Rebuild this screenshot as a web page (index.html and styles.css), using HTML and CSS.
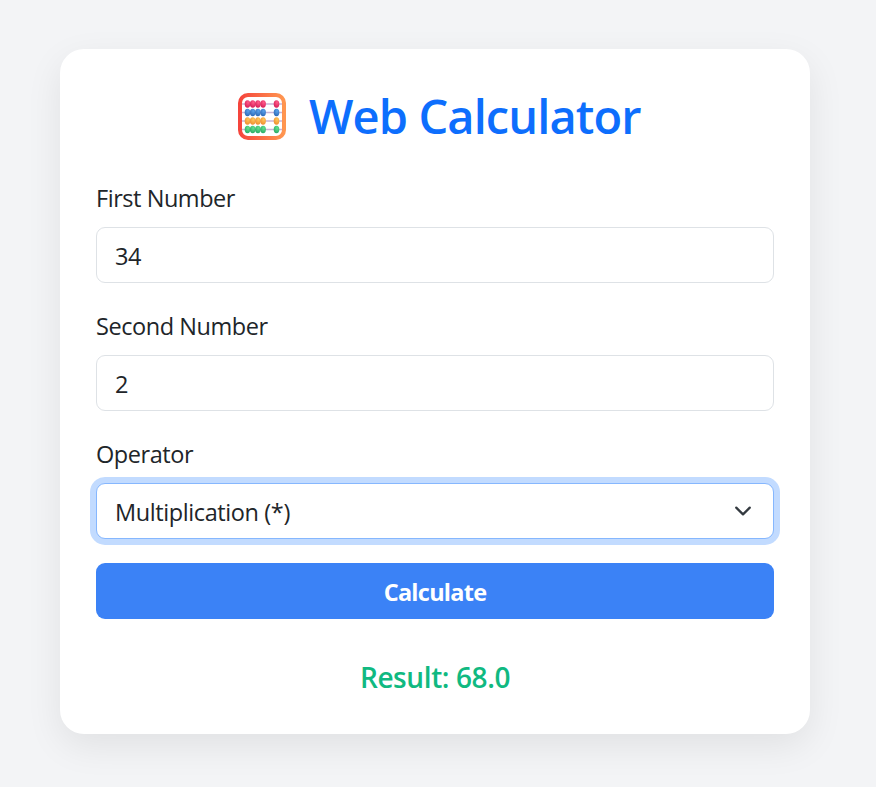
FILE: index.html
```html
<!DOCTYPE html>
<html lang="en">
<head>
<meta charset="utf-8">
<title>Web Calculator</title>
<link rel="stylesheet" href="styles.css">
</head>
<body>
<main class="card">
  <h1 class="title">
    <svg class="abacus" viewBox="0 0 48 48" aria-hidden="true">
      <defs>
        <linearGradient id="frame" x1="0" y1="0" x2="1" y2="0"><stop offset="0" stop-color="#f5453c"/><stop offset="1" stop-color="#ff9650"/></linearGradient>
        <radialGradient id="pink" cx=".6" cy=".3" r=".7"><stop offset="0" stop-color="#ff5c8a"/><stop offset="1" stop-color="#d81f58"/></radialGradient>
        <radialGradient id="blue" cx=".6" cy=".3" r=".7"><stop offset="0" stop-color="#5aa2ea"/><stop offset="1" stop-color="#2f6bb8"/></radialGradient>
        <radialGradient id="gold" cx=".6" cy=".3" r=".7"><stop offset="0" stop-color="#ffc65a"/><stop offset="1" stop-color="#ee8f30"/></radialGradient>
        <radialGradient id="green" cx=".6" cy=".3" r=".7"><stop offset="0" stop-color="#62e08f"/><stop offset="1" stop-color="#2bab66"/></radialGradient>
      </defs>
      <rect x="2" y="2" width="44" height="43" rx="8" fill="#fff" stroke="url(#frame)" stroke-width="4"/>
      <path d="M4 11h40M4 19.500h40M4 28h40M4 36.500h40" stroke="#c9b4d6" stroke-width="1.600"/>
      <g fill="url(#pink)"><ellipse cx="9.500" cy="11" rx="2.800" ry="3.700"/><ellipse cx="14.700" cy="11" rx="2.800" ry="3.700"/><ellipse cx="19.900" cy="11" rx="2.800" ry="3.700"/><ellipse cx="25.100" cy="11" rx="2.800" ry="3.700"/><ellipse cx="38.500" cy="11" rx="2.800" ry="3.700"/></g>
      <g fill="url(#blue)"><ellipse cx="9.500" cy="19.500" rx="2.800" ry="3.700"/><ellipse cx="14.700" cy="19.500" rx="2.800" ry="3.700"/><ellipse cx="19.900" cy="19.500" rx="2.800" ry="3.700"/><ellipse cx="25.100" cy="19.500" rx="2.800" ry="3.700"/><ellipse cx="38.500" cy="19.500" rx="2.800" ry="3.700"/></g>
      <g fill="url(#gold)"><ellipse cx="9.500" cy="28" rx="2.800" ry="3.700"/><ellipse cx="14.700" cy="28" rx="2.800" ry="3.700"/><ellipse cx="19.900" cy="28" rx="2.800" ry="3.700"/><ellipse cx="25.100" cy="28" rx="2.800" ry="3.700"/><ellipse cx="38.500" cy="28" rx="2.800" ry="3.700"/></g>
      <g fill="url(#green)"><ellipse cx="9.500" cy="36.500" rx="2.800" ry="3.700"/><ellipse cx="14.700" cy="36.500" rx="2.800" ry="3.700"/><ellipse cx="19.900" cy="36.500" rx="2.800" ry="3.700"/><ellipse cx="25.100" cy="36.500" rx="2.800" ry="3.700"/><ellipse cx="38.500" cy="36.500" rx="2.800" ry="3.700"/></g>
    </svg>
    <span class="title-text">Web Calculator</span>
  </h1>
  <form>
    <div class="field">
      <label class="label" for="a">First Number</label>
      <input class="control" id="a" type="text" value="34">
    </div>
    <div class="field">
      <label class="label" for="b">Second Number</label>
      <input class="control" id="b" type="text" value="2">
    </div>
    <div class="field">
      <label class="label" for="op">Operator</label>
      <div class="control focused" id="op"><span>Multiplication (*)</span>
        <svg class="chevron" viewBox="0 0 16 16" aria-hidden="true"><path fill="none" stroke="#343a40" stroke-linecap="round" stroke-linejoin="round" stroke-width="2" d="m2 5 6 6 6-6"/></svg>
      </div>
    </div>
    <button class="button" type="button">Calculate</button>
  </form>
  <p class="result">Result: 68.0</p>
</main>
</body>
</html>
```
FILE: styles.css
```css
* { box-sizing: border-box; }
body {
  margin: 0;
  min-height: 787px;
  padding: 49px 66px 53px 60px;
  background: #f3f4f6;
  color: #212529;
  font: 400 23.5px/36px "Segoe UI", "Open Sans", "Noto Sans", sans-serif;
}
.card {
  width: 750px;
  height: 685px;
  padding: 36px;
  background: #fff;
  border-radius: 24px;
  box-shadow: 0 12px 36px rgba(0, 0, 0, .08);
}
.title {
  display: flex;
  align-items: center;
  justify-content: center;
  gap: 23px;
  height: 58px;
  margin: 0 0 36px;
  padding: 3px 0 0 8px;
  color: #0d6efd;
  font-size: 47px;
  font-weight: 550;
  line-height: 58px;
}
.title-text { width: 331px; white-space: nowrap; letter-spacing: -.9px; }
.abacus { width: 48px; height: 48px; flex: none; margin-top: 2px; }
.field { margin-bottom: 24px; }
.label {
  display: block;
  height: 36px;
  margin-bottom: 12px;
  padding-top: 1px;
  letter-spacing: -.45px;
}
.control {
  display: flex;
  align-items: center;
  width: 100%;
  height: 56px;
  padding: 1px 18px 0;
  border: 1px solid #dee2e6;
  border-radius: 9px;
  background: #fff;
  color: #212529;
  font: inherit;
  letter-spacing: -.4px;
  outline: none;
}
.focused {
  justify-content: space-between;
  border-color: #86b7fe;
  box-shadow: 0 0 0 6px #c2dbff;
}
.chevron { width: 18px; height: 18px; margin: -1px 3px 0 0; }
.button {
  display: block;
  width: 100%;
  height: 56px;
  padding: 2px 0 0;
  border: 0;
  border-radius: 9px;
  background: #3b82f6;
  color: #fff;
  font: inherit;
  font-weight: 700;
  letter-spacing: -.75px;
}
.result {
  margin: 40px 0 0;
  text-align: center;
  color: #10b981;
  font-size: 28px;
  font-weight: 550;
  letter-spacing: -.4px;
}
```
